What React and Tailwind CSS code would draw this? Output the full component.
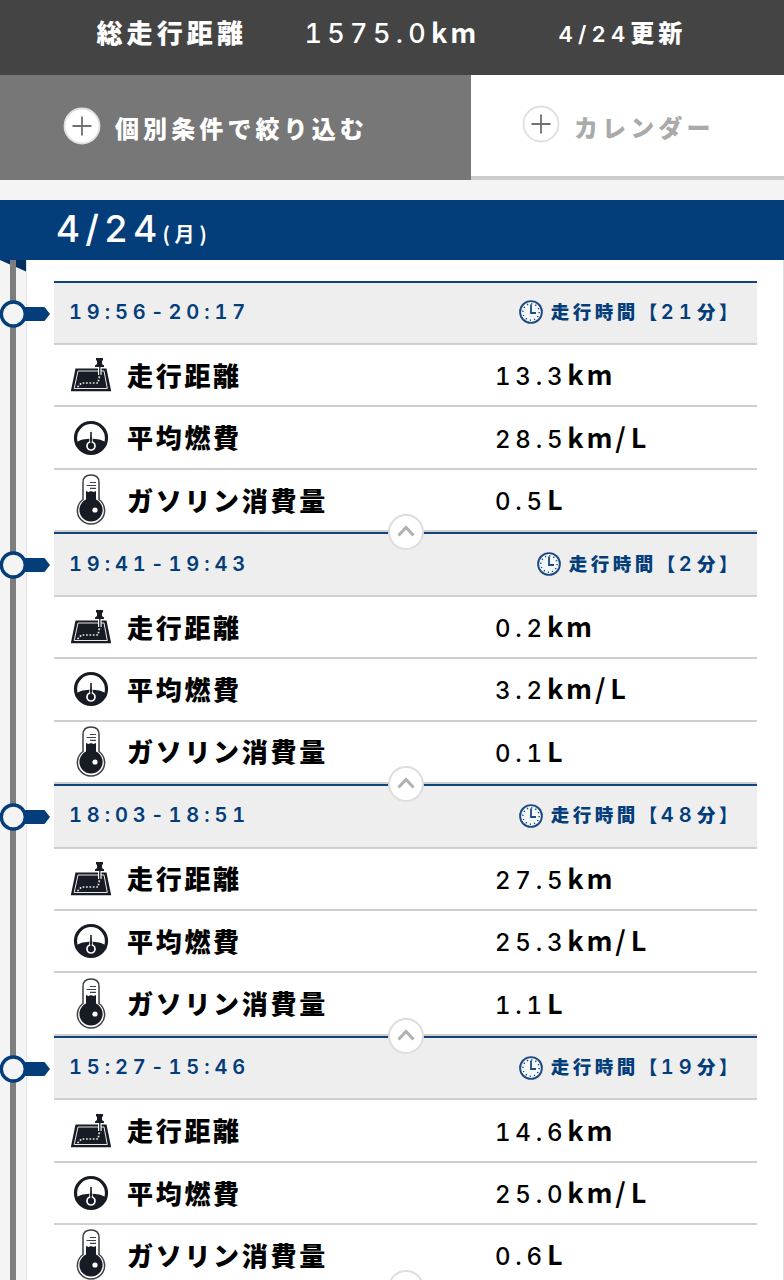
import React from "react";

const trips = [
  { time: "19:56-20:17", minutes: "21", distance: "13.3", mileage: "28.5", gas: "0.5" },
  { time: "19:41-19:43", minutes: "2", distance: "0.2", mileage: "3.2", gas: "0.1" },
  { time: "18:03-18:51", minutes: "48", distance: "27.5", mileage: "25.3", gas: "1.1" },
  { time: "15:27-15:46", minutes: "19", distance: "14.6", mileage: "25.0", gas: "0.6" },
];

const PlusIcon = ({ className }) => (
  <svg viewBox="0 0 38 38" className={className}>
    <circle cx="19" cy="19" r="17.5" fill="#fff" stroke="#e0e0e0" strokeWidth="1.8" />
    <path d="M19 9.5v19M9.5 19h19" stroke="#707070" strokeWidth="1.8" />
  </svg>
);

const ClockIcon = () => (
  <svg viewBox="0 0 24 24" className="h-6 w-6 shrink-0" fill="none" stroke="#1c4a80">
    <circle cx="12" cy="12" r="10.9" fill="#f4f8fb" strokeWidth="1.9" />
    <circle cx="12" cy="12" r="8.2" strokeWidth="1.5" strokeDasharray="1.2 3.09" />
    <path d="M12 4.5v8.5h5" strokeWidth="1.8" />
  </svg>
);

const MapIcon = () => (
  <svg viewBox="0 0 42 34" className="h-[34px] w-[42px]">
    <path d="M5.5 10.5h31l4.7 22.8H.8z" fill="#171b23" />
    <path d="M8 13h26l3.3 17.5H4.2z" fill="none" stroke="#e8e8e8" strokeWidth="1" />
    <path d="M7.5 29l4-4H28l1.500-7" fill="none" stroke="#e8e8e8" strokeWidth="1.7" strokeDasharray="1.7 1.7" />
    <path d="M28 9h3.6v8H28z" fill="#fff" />
    <path d="M26 0h7v2l-1 1v3l2 1.5V9h-9V7.5L27 6V3l-1-1z" fill="#171b23" />
    <path d="M29.8 9v8" stroke="#171b23" strokeWidth="1.3" />
  </svg>
);

const GaugeIcon = () => (
  <svg viewBox="0 0 36 36" className="h-9 w-9">
    <circle cx="18" cy="18" r="15.5" fill="#fff" stroke="#171b23" strokeWidth="3.2" />
    <path d="M4 22C9 17.5 27 17.5 32 22C30 29 25 33.5 18 33.5S6 29 4 22z" fill="#171b23" />
    <path d="M16.3 23L18 9.5L19.7 23z" fill="#171b23" stroke="#fff" strokeWidth=".8" />
    <circle cx="18" cy="26" r="4" fill="#171b23" stroke="#fff" strokeWidth="1.7" />
    <path d="M18 12v13" stroke="#171b23" strokeWidth="1.5" />
  </svg>
);

const ThermometerIcon = () => (
  <svg viewBox="0 0 30 52" className="h-[52px] w-[30px]">
    <path
      d="M7 8.5Q7 1 15 1T23 8.5V25.5A13.6 13.6 0 1 1 7 25.5z"
      fill="#fff"
      stroke="#3c4047"
      strokeWidth="1.5"
    />
    <path d="M10 17l2.5 1 2.5-1 2.5 1 2.5-1v8.5A11.6 11.6 0 1 1 10 25.5z" fill="#171b23" />
    <circle cx="19" cy="36" r="2.6" fill="#fff" />
    <path d="M14 8.5h6M10.5 11.5h9.5M14 14.3h6" stroke="#3c4047" strokeWidth="1.2" />
  </svg>
);

const Marker = () => (
  <svg viewBox="0 0 50 28" className="h-7 w-[50px]">
    <path d="M20 7h24.5l5.5 7-5.5 7H20z" fill="#033d7a" />
    <circle cx="13.3" cy="14" r="12" fill="#f4f4f4" stroke="#033d7a" strokeWidth="3.4" />
  </svg>
);

const Row = ({ icon, label, value, unit, per }) => (
  <div className="flex h-[62.4px] items-center border-b-2 border-[#cfcfcf] text-black">
    <div className="flex w-[73px] shrink-0 justify-center">{icon}</div>
    <div className="w-[368px] shrink-0 pb-px text-[26px] font-black tracking-[2.7px]">{label}</div>
    <div className="flex items-baseline pb-px">
      <span className="font-['Inter'] text-[24px] font-medium tracking-[4.8px] tabular-nums">{value}</span>
      <span className="text-[27px] font-bold tracking-[2.8px]">{unit}</span>
      {per && <span className="text-[27px] font-bold tracking-[5px]">{per}</span>}
    </div>
  </div>
);

const Trip = ({ trip }) => (
  <section className="relative h-[251.8px] border-t-2 border-[#12447c]">
    {/* timeline marker */}
    <div className="absolute top-[17px] -left-[54px]">
      <Marker />
    </div>
    <div className="flex h-[62.6px] items-center justify-between border-b-2 border-[#cfcfcf] bg-[#eeeeee] pr-4 pb-px pl-[15px] text-[#033d7a]">
      <span className="pb-px font-['Inter'] text-[20px] font-semibold tracking-[4.9px] tabular-nums">{trip.time}</span>
      <div className="flex items-center gap-2">
        <ClockIcon />
        <div className="pb-px text-[18.5px] font-black tracking-[3.5px]">
          走行時間【
          <span className="font-['Inter'] text-[20px] font-semibold tracking-[5.2px] tabular-nums">{trip.minutes}</span>
          分】
        </div>
      </div>
    </div>
    <Row icon={<MapIcon />} label="走行距離" value={trip.distance} unit="km" />
    <Row icon={<GaugeIcon />} label="平均燃費" value={trip.mileage} unit="km" per="/L" />
    <Row icon={<ThermometerIcon />} label="ガソリン消費量" value={trip.gas} unit="L" />
    {/* collapse button */}
    <div className="absolute -bottom-[18px] left-[334px] z-10 flex h-9 w-9 items-center justify-center rounded-full border-2 border-[#dedede] bg-white">
      <svg viewBox="0 0 18 12" className="mb-0.5 h-3 w-[18px]">
        <path d="M1.5 10.5L9 2.5l7.5 8" fill="none" stroke="#b0b0b0" strokeWidth="3" />
      </svg>
    </div>
  </section>
);

const App = () => {
  return (
    <div className="h-[1280px] w-[784px] overflow-hidden bg-[#f4f4f4] font-['Noto_Sans_CJK_JP',sans-serif] leading-none">
      {/* Total */}
      <header className="flex h-[75px] items-baseline bg-[#444444] pt-[18px] pl-[96.5px] font-bold whitespace-nowrap text-white">
        <span className="w-[208px] text-[26px] font-black tracking-[4.1px]">総走行距離</span>
        <div className="w-[254px]">
          <span className="font-['Inter'] text-[27px] font-medium tracking-[5.3px] tabular-nums">1575.0</span>
          <span className="text-[27px] tracking-[3px]">km</span>
        </div>
        <div className="relative -top-px">
          <span className="font-['Inter'] text-[22px] font-semibold tracking-[5.2px] tabular-nums">4/24</span>
          <span className="text-[24px] font-black tracking-[4px]">更新</span>
        </div>
      </header>

      {/* Filters */}
      <div className="flex h-[105px] text-[24px] font-black tracking-[4.1px] whitespace-nowrap">
        <button className="flex w-[471px] items-center bg-[#777777] pl-[63px] text-white">
          <PlusIcon className="mr-[14px] mb-1 h-[38px] w-[38px]" />
          <span>個別条件で絞り込む</span>
        </button>
        <button className="flex flex-1 items-center border-b-4 border-[#cccccc] bg-white pl-[51px] text-[#aaaaaa]">
          <PlusIcon className="mr-[14px] mb-1 h-[38px] w-[38px]" />
          <span className="mt-[3px]">カレンダー</span>
        </button>
      </div>

      {/* Date */}
      <div className="mt-5 flex h-[60px] items-baseline bg-[#033d7a] pt-[10px] pl-[56px] text-white">
        <span className="font-['Inter'] text-[37px] font-medium tracking-[5.2px] tabular-nums">4/24</span>
        <span className="text-[20px] font-bold tracking-[4.6px]">(月)</span>
      </div>

      <div className="flex h-[1020px]">
        {/* Timeline */}
        <div className="flex w-[27px] shrink-0 items-start border-r border-[#dfe5ea]">
          <div className="ml-[10px] h-full w-[6px] bg-[#7d7d7d]"></div>
          <svg viewBox="0 0 26 12" className="-ml-4 h-3 w-[26px] shrink-0">
            <path d="M0 0h10v4.5L0 0zM16 0h10v11.5L16 7z" fill="#022e60" />
          </svg>
        </div>
        <main className="w-[757px] border-r border-[#dddddd] bg-white pt-[20.5px] pr-[26px] pl-[27px]">
          {trips.map((trip) => (
            <Trip key={trip.time} trip={trip} />
          ))}
        </main>
      </div>
    </div>
  );
};

export default App;
